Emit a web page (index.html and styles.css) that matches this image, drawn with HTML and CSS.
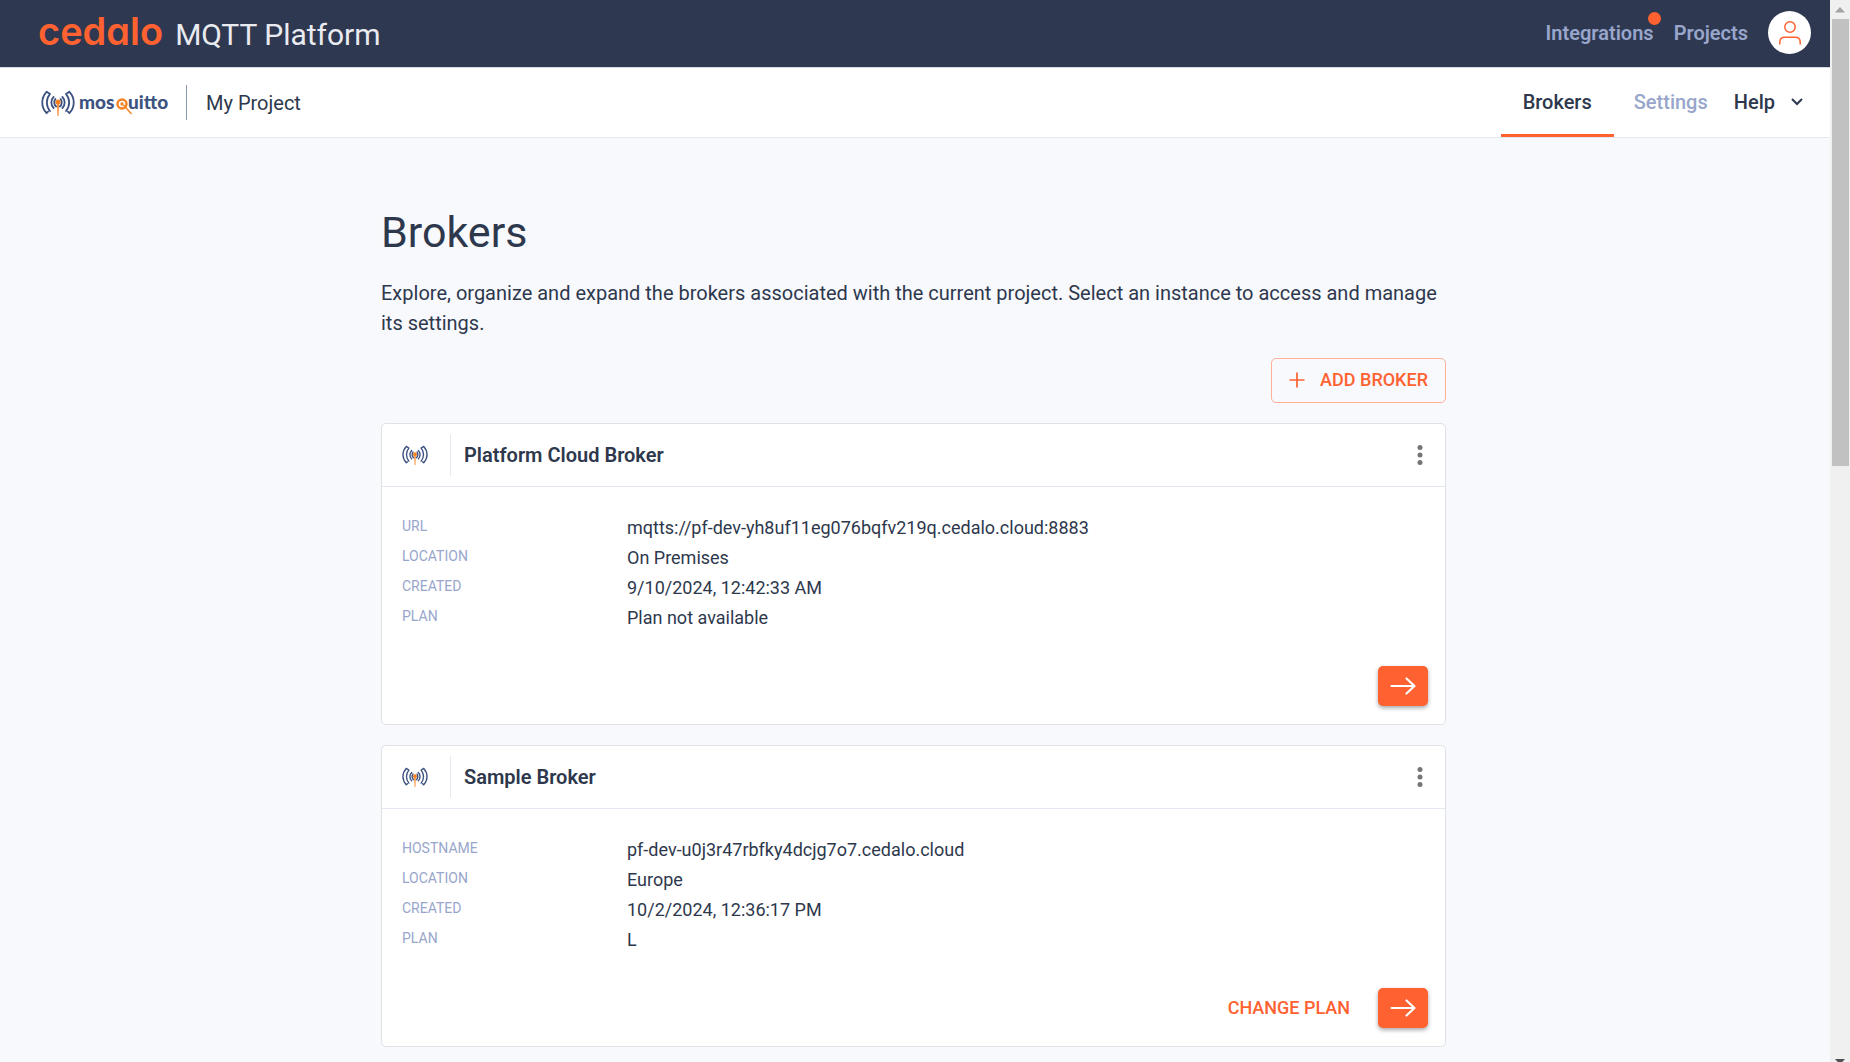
FILE: index.html
```html
<!DOCTYPE html>
<html lang="en">
<head>
<meta charset="utf-8">
<title>Cedalo MQTT Platform</title>
<link rel="stylesheet" href="styles.css">
</head>
<body>
<svg class="sprite" aria-hidden="true">
  <symbol id="antenna" viewBox="0 0 34 26">
    <g fill="none" stroke="#3c5280" stroke-width="1.8" stroke-linecap="round">
      <path d="M5.600 1.800C-.2 8-.2 17 5.600 23.200M9 4C4.800 9 4.800 16 9 21M5.600 1.800L9 4M5.600 23.200l1.500-1.500M12.600 7c-3 3-3 8 0 11M15.200 16.500c-2.200-1.500-2.600-5-.8-7.500"/>
      <path d="M28.400 1.800c5.800 6.200 5.800 15.200 0 21.400M25 4c4.200 5 4.200 12 0 17M28.400 1.800L25 4M28.400 23.200l-1.500-1.500M21.400 7c3 3 3 8 0 11M18.800 16.500c2.200-1.500 2.600-5 .8-7.500"/>
    </g>
    <circle cx="17" cy="12" r="2.600" fill="#f58220"/>
    <path d="M16 12h2l-.5 14h-1z" fill="#f58220"/>
  </symbol>
  <symbol id="dots" viewBox="0 0 30 30">
    <g fill="#757575"><circle cx="15" cy="7.500" r="2.500"/><circle cx="15" cy="15" r="2.500"/><circle cx="15" cy="22.500" r="2.500"/></g>
  </symbol>
  <symbol id="arrow" viewBox="0 0 26 20">
    <path d="M1.500 10h23M16.500 2.500L24.500 10l-8 7.500" fill="none" stroke="#fff" stroke-width="2.200" stroke-linecap="round" stroke-linejoin="round"/>
  </symbol>
</svg>
<div class="window">
  <div class="app">
    <header class="topbar">
      <a class="brand" href="#"><span class="brand-name">cedalo</span><span class="brand-product">MQTT Platform</span></a>
      <nav class="topnav">
        <a class="toplink" href="#">Integrations<span class="badge"></span></a>
        <a class="toplink" href="#">Projects</a>
        <button class="avatar" type="button" aria-label="Account">
          <svg width="22" height="24" viewBox="0 0 22 24" fill="none" stroke="#ff6230" stroke-width="1.500"><circle cx="11" cy="6" r="5.200"/><path d="M.8 23.500v-2.300c0-3 2-4.900 4.900-4.900h10.600c2.900 0 4.900 1.900 4.900 4.900v2.300"/></svg>
        </button>
      </nav>
    </header>
    <div class="subbar">
      <div class="project">
        <a class="mosquitto" href="#" aria-label="mosquitto">
          <svg width="34" height="26"><use href="#antenna"/></svg>
          <svg class="wordmark" width="96" height="30" viewBox="0 0 96 30">
            <text x="0" y="21">mos</text>
            <g fill="none" stroke="#f58220"><circle cx="43" cy="16" r="4.500" stroke-width="2.400"/><circle cx="43" cy="16" r="1" stroke-width="1.400"/><path d="M44.500 17l8 9" stroke-width="1.400"/></g>
            <text x="49" y="21">uitto</text>
          </svg>
        </a>
        <span class="project-name">My Project</span>
      </div>
      <nav class="tabs">
        <a class="tab tab-active" href="#">Brokers</a>
        <a class="tab" href="#">Settings</a>
        <button class="help" type="button">Help
          <svg width="12" height="8" viewBox="0 0 12 8" fill="none" stroke="#2e384d" stroke-width="2"><path d="M1 1l5 5 5-5"/></svg>
        </button>
      </nav>
    </div>
    <main class="content">
      <h1>Brokers</h1>
      <p class="intro">Explore, organize and expand the brokers associated with the current project. Select an instance to access and manage its settings.</p>
      <div class="actions">
        <button class="add" type="button">
          <svg width="16" height="16" viewBox="0 0 16 16" stroke="#ff6230" stroke-width="1.700"><path d="M8 .5v15M.5 8h15"/></svg>
          ADD BROKER
        </button>
      </div>
      <article class="card">
        <header class="card-head">
          <span class="card-icon"><svg width="26" height="20"><use href="#antenna"/></svg></span>
          <h2>Platform Cloud Broker</h2>
          <button class="more" type="button" aria-label="More"><svg width="30" height="30"><use href="#dots"/></svg></button>
        </header>
        <dl class="details">
          <dt>URL</dt><dd>mqtts://pf-dev-yh8uf11eg076bqfv219q.cedalo.cloud:8883</dd>
          <dt>LOCATION</dt><dd>On Premises</dd>
          <dt>CREATED</dt><dd>9/10/2024, 12:42:33 AM</dd>
          <dt>PLAN</dt><dd>Plan not available</dd>
        </dl>
        <footer class="card-foot">
          <button class="go" type="button" aria-label="Open broker"><svg width="26" height="20"><use href="#arrow"/></svg></button>
        </footer>
      </article>
      <article class="card">
        <header class="card-head">
          <span class="card-icon"><svg width="26" height="20"><use href="#antenna"/></svg></span>
          <h2>Sample Broker</h2>
          <button class="more" type="button" aria-label="More"><svg width="30" height="30"><use href="#dots"/></svg></button>
        </header>
        <dl class="details">
          <dt>HOSTNAME</dt><dd>pf-dev-u0j3r47rbfky4dcjg7o7.cedalo.cloud</dd>
          <dt>LOCATION</dt><dd>Europe</dd>
          <dt>CREATED</dt><dd>10/2/2024, 12:36:17 PM</dd>
          <dt>PLAN</dt><dd>L</dd>
        </dl>
        <footer class="card-foot">
          <button class="change" type="button">CHANGE PLAN</button>
          <button class="go" type="button" aria-label="Open broker"><svg width="26" height="20"><use href="#arrow"/></svg></button>
        </footer>
      </article>
    </main>
  </div>
  <div class="scrollbar" aria-hidden="true">
    <svg class="scroll-arrow" width="10" height="6" viewBox="0 0 10 6"><path d="M0 5.500L5 0l5 5.500z" fill="#a3a3a3"/></svg>
    <div class="scroll-thumb"></div>
    <svg class="scroll-arrow scroll-down" width="10" height="6" viewBox="0 0 10 6"><path d="M0 0h10L5 5.500z" fill="#505050"/></svg>
  </div>
</div>
</body>
</html>
```
FILE: styles.css
```css
* { box-sizing: border-box; }
body {
  margin: 0;
  background: #f8f9fd;
  color: #2e384d;
  font: 400 20px/30px Roboto, "Liberation Sans", sans-serif;
}
a { color: inherit; text-decoration: none; }
button { font: inherit; color: inherit; background: none; border: 0; padding: 0; cursor: pointer; }
svg { display: block; flex: none; }
.sprite { position: absolute; width: 0; height: 0; }

.window { display: grid; grid-template-columns: 1fr 20px; height: 100vh; overflow: hidden; }
.app { min-width: 0; overflow: hidden; }

.topbar {
  display: flex;
  justify-content: space-between;
  align-items: center;
  height: 68px;
  padding: 0 19px 2px 38px;
  background: #2f3851;
  border-bottom: 1px solid #d5d9e6;
}
.brand { display: flex; align-items: baseline; gap: 12px; line-height: 40px; }
.brand-name { color: #ff6230; font-family: Inter, sans-serif; font-size: 38px; font-weight: 600; font-feature-settings: "cv11"; }
.brand-product { color: #e9ebf0; font-size: 30px; }
.topnav { display: flex; align-items: center; gap: 20px; color: #98a6cb; font-weight: 600; }
.toplink { position: relative; }
.badge { position: absolute; top: -6px; right: -7px; width: 13px; height: 13px; border-radius: 50%; background: #ff6230; }
.avatar { display: grid; place-items: center; width: 43px; height: 43px; border-radius: 50%; background: #fff; }

.subbar {
  display: flex;
  justify-content: space-between;
  height: 70px;
  padding: 0 27px 0 41px;
  background: #fff;
  border-bottom: 1px solid #e4e8f0;
}
.project { display: flex; align-items: center; }
.mosquitto { display: flex; align-items: center; gap: 4px; padding-right: 11px; }
.wordmark text { fill: #3c5280; font: 900 19px Lato, sans-serif; }
.project-name { padding: 2px 0 0 19px; border-left: 1px solid #8798ad; line-height: 33px; }
.tabs { display: flex; font-weight: 500; }
.tab { padding: 19px 22px 0; color: #98a6cb; }
.tab + .tab { padding-left: 20px; }
.tab-active { color: #2e384d; border-bottom: 3px solid #ff6230; }
.help { display: flex; align-items: center; gap: 16px; font-weight: 500; padding: 0 0 2px 4px; }

.content { max-width: 1068px; margin: 0 auto; padding: 66px 3px 0 0; }
h1 { margin: 0 0 18px; font-size: 43px; line-height: 56px; font-weight: 400; }
.intro { margin: 0; }
.actions { display: flex; justify-content: flex-end; margin: 20px 0; }
.add {
  display: flex;
  align-items: center;
  gap: 15px;
  height: 45px;
  padding: 0 17px 1px;
  border: 1px solid #ffb097;
  border-radius: 5px;
  color: #ff6230;
  font-size: 18px;
  font-weight: 500;
}

.card { margin-bottom: 20px; background: #fff; border: 1px solid #e0e1e4; border-radius: 5px; }
.card-head { display: flex; align-items: center; height: 63px; padding-right: 10px; border-bottom: 1px solid #e4e8f0; }
.card-icon { display: flex; align-items: center; width: 69px; height: 42px; padding-left: 20px; border-right: 1px solid #e4e8f0; }
h2 { flex: 1; margin: 0; padding-left: 13px; font-size: 20px; font-weight: 600; }
.details { display: grid; grid-template-columns: 225px 1fr; grid-auto-rows: 30px; margin: 0; padding: 26px 20px 33px; }
dt { color: #98a6cb; font-size: 14px; line-height: 26px; }
dd { margin: 0; font-size: 18px; line-height: 29px; }
.card-foot { display: flex; justify-content: flex-end; align-items: center; gap: 28px; padding: 0 17px 18px; }
.change { color: #ff6230; font-size: 18px; font-weight: 500; }
.go {
  display: grid;
  place-items: center;
  width: 50px;
  height: 40px;
  border-radius: 5px;
  background: #ff6230;
  box-shadow: 0 2px 4px rgba(0, 0, 0, .35);
}

.scrollbar { display: flex; flex-direction: column; align-items: center; background: #f0f0f0; padding-top: 7px; overflow: hidden; }
.scroll-thumb { width: 17px; height: 42.4%; margin-top: 6px; background: #c1c1c1; }
.scroll-down { margin: auto 0 -3px; }
```
